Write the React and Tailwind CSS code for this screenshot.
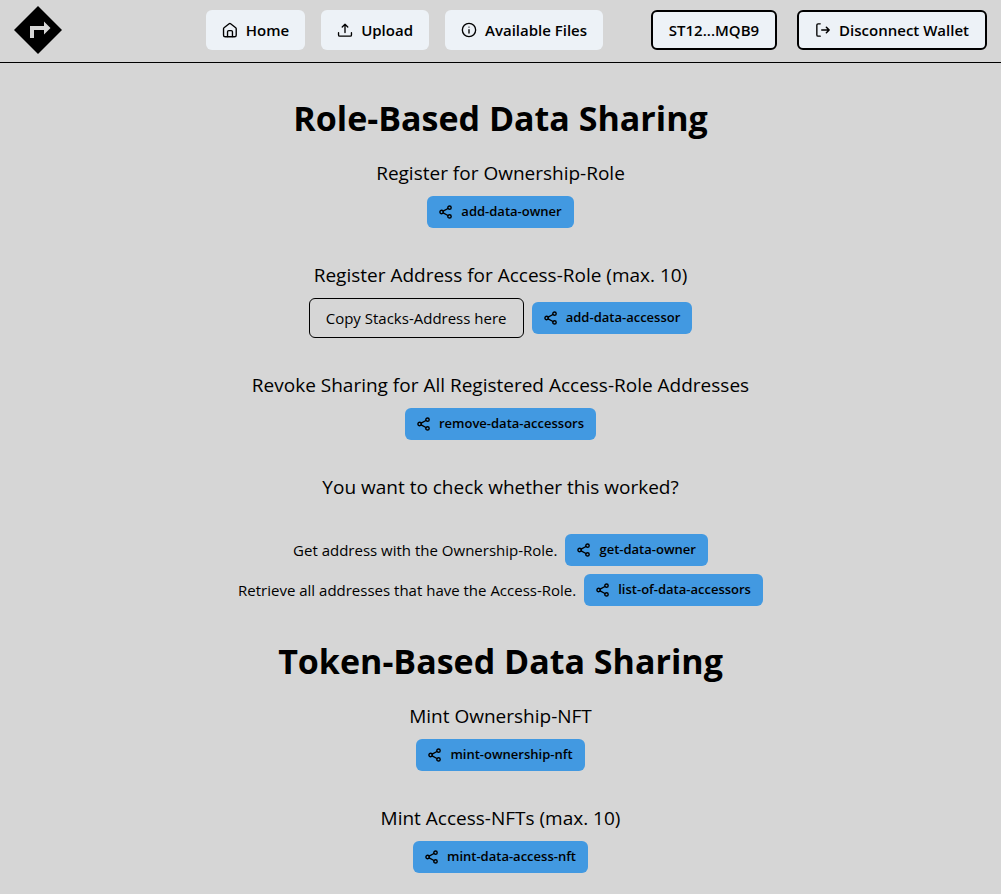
import { useState } from "react";

const line = {
  fill: "none",
  stroke: "currentColor",
  strokeLinecap: "round",
  strokeLinejoin: "round",
  "aria-hidden": true,
};

function HomeIcon() {
  return (
    <svg {...line} viewBox="0 0 26 26" strokeWidth="2.200" className="size-4 shrink-0">
      <path d="M2.500 11a2 2 0 01.8-1.600l8.300-6.500a2 2 0 012.400 0l8.300 6.500a2 2 0 01.8 1.600v10a3 3 0 01-3 3H5.500a3 3 0 01-3-3z" />
      <path d="M9 23.500V16a2 2 0 012-2h4a2 2 0 012 2v7.500" />
    </svg>
  );
}

function UploadIcon() {
  return (
    <svg {...line} viewBox="-1 -1 26 26" strokeWidth="2.200" className="size-4 shrink-0">
      <path d="M1.500 16.500V20a2 2 0 002 2h17a2 2 0 002-2v-3.500M12 16V2.500M7.500 7L12 2.500 16.500 7" />
    </svg>
  );
}

function InfoIcon() {
  return (
    <svg {...line} viewBox="-1 -1 26 26" strokeWidth="2.200" className="size-4 shrink-0">
      <circle cx="12" cy="12" r="10.800" />
      <path d="M12 11.500V17M12 7.300v.01" />
    </svg>
  );
}

function LogOutIcon() {
  return (
    <svg {...line} viewBox="-1 -1 26 26" strokeWidth="2.200" className="size-4 shrink-0">
      <path d="M7.500 2H4a2 2 0 00-2 2v16a2 2 0 002 2h3.500" />
      <path d="M10 12h12M17.500 7.500L22 12l-4.500 4.500" strokeWidth="2.500" />
    </svg>
  );
}

function ShareIcon() {
  return (
    <svg {...line} viewBox="0 0 24 24" strokeWidth="2.400" className="size-[14px] shrink-0">
      <circle cx="18" cy="4.500" r="2.900" />
      <circle cx="18" cy="19.500" r="2.900" />
      <circle cx="4.500" cy="12" r="2.900" />
      <path d="M15.400 6L7.100 10.600M15.400 18L7.100 13.400" />
    </svg>
  );
}

function Logo() {
  return (
    <svg viewBox="0 0 48 48" className="size-12" aria-hidden="true">
      <path d="M24 0L48 24L24 48L0 24z" fill="#000" />
      <path d="M16 32V20h14v-4.500l6.500 6.500-6.500 6.500V24H20v8z" fill="#d6d6d6" />
    </svg>
  );
}

function NavButton({ icon, children }) {
  return (
    <button className="flex h-10 items-center gap-2 rounded-md bg-[#edf2f7] px-4 text-[15px] font-semibold whitespace-nowrap">
      {icon}
      {children}
    </button>
  );
}

function WalletButton({ icon, children }) {
  return (
    <button className="flex h-10 items-center gap-2 rounded-md border-2 border-black bg-[#edf2f7] px-4 text-[15px] font-semibold whitespace-nowrap">
      {icon}
      {children}
    </button>
  );
}

function ActionButton({ children }) {
  return (
    <button className="flex h-8 items-center gap-2 rounded-md bg-[#4299e1] px-3 text-[13px] font-semibold whitespace-nowrap">
      <ShareIcon />
      {children}
    </button>
  );
}

function Section({ title, children }) {
  return (
    <section className="flex flex-col items-center gap-2">
      <h2 className="text-[19px] leading-[30px]">{title}</h2>
      {children}
    </section>
  );
}

export default function App() {
  const [address, setAddress] = useState("");
  return (
    <div className="min-h-screen bg-[#d6d6d6] font-['Open_Sans','Noto_Sans',sans-serif] text-[15px] font-normal text-black">
      <header className="flex items-center justify-between border-b border-black pt-1.5 pr-3.5 pb-2 pl-3.5">
        <div className="w-36">
          <a href="#" aria-label="Start page" className="inline-block align-top">
            <Logo />
          </a>
        </div>
        <nav className="flex gap-4">
          <NavButton icon={<HomeIcon />}>Home</NavButton>
          <NavButton icon={<UploadIcon />}>Upload</NavButton>
          <NavButton icon={<InfoIcon />}>Available Files</NavButton>
        </nav>
        <div className="flex gap-5">
          <WalletButton>ST12...MQB9</WalletButton>
          <WalletButton icon={<LogOutIcon />}>Disconnect Wallet</WalletButton>
        </div>
      </header>
      <main className="flex flex-col items-center pt-8">
        <h1 className="text-[34px] leading-[46px] font-bold">Role-Based Data Sharing</h1>
        <div className="flex flex-col items-center gap-8 pt-[17px]">
          <Section title="Register for Ownership-Role">
            <ActionButton>add-data-owner</ActionButton>
          </Section>
          <Section title="Register Address for Access-Role (max. 10)">
            <div className="flex items-center gap-2">
              <input
                aria-label="Stacks address"
                placeholder="Copy Stacks-Address here"
                value={address}
                onChange={(e) => setAddress(e.target.value)}
                className="h-10 w-[215px] rounded-md border border-black bg-transparent px-4 placeholder:text-black"
              />
              <ActionButton>add-data-accessor</ActionButton>
            </div>
          </Section>
          <Section title="Revoke Sharing for All Registered Access-Role Addresses">
            <ActionButton>remove-data-accessors</ActionButton>
          </Section>
          <Section title="You want to check whether this worked?" />
          <div className="flex flex-col items-center gap-2">
            <div className="flex items-center gap-2">
              <p>Get address with the Ownership-Role.</p>
              <ActionButton>get-data-owner</ActionButton>
            </div>
            <div className="flex items-center gap-2">
              <p>Retrieve all addresses that have the Access-Role.</p>
              <ActionButton>list-of-data-accessors</ActionButton>
            </div>
          </div>
        </div>
        <h1 className="pt-8 text-[34px] leading-[46px] font-bold">Token-Based Data Sharing</h1>
        <div className="flex flex-col items-center gap-8 pt-[17px] pb-5">
          <Section title="Mint Ownership-NFT">
            <ActionButton>mint-ownership-nft</ActionButton>
          </Section>
          <Section title="Mint Access-NFTs (max. 10)">
            <ActionButton>mint-data-access-nft</ActionButton>
          </Section>
        </div>
      </main>
    </div>
  );
}
